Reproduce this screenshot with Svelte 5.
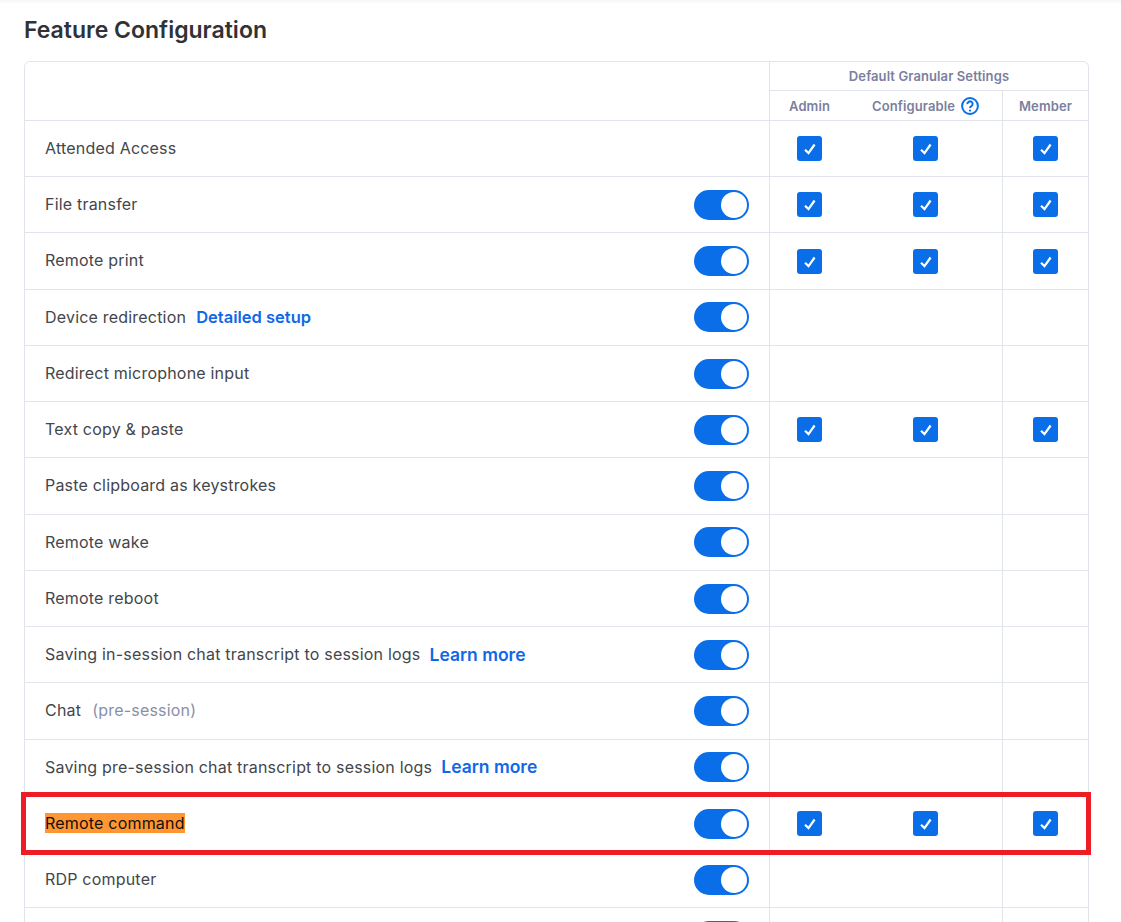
<script>
  const rows = [
    { label: 'Attended Access', toggle: false, checks: true },
    { label: 'File transfer', toggle: true, checks: true },
    { label: 'Remote print', toggle: true, checks: true },
    { label: 'Device redirection', link: 'Detailed setup', small: true, toggle: true },
    { label: 'Redirect microphone input', toggle: true },
    { label: 'Text copy & paste', toggle: true, checks: true },
    { label: 'Paste clipboard as keystrokes', toggle: true },
    { label: 'Remote wake', toggle: true },
    { label: 'Remote reboot', toggle: true },
    { label: 'Saving in-session chat transcript to session logs', link: 'Learn more', toggle: true },
    { label: 'Chat', note: '(pre-session)', toggle: true },
    { label: 'Saving pre-session chat transcript to session logs', link: 'Learn more', toggle: true },
    { label: 'Remote command', mark: true, toggle: true, checks: true },
    { label: 'RDP computer', toggle: true },
    { label: '', toggle: true }
  ];
</script>

<div class="page">
  <h2 class="title">Feature Configuration</h2>

  <div class="card">
    <div class="head">
      <div class="head__blank"></div>
      <div class="head__group">
        <div class="head__caption">Default Granular Settings</div>
        <div class="cols">
          <span>Admin</span>
          <span class="cols__mid">
            Configurable
            <svg class="help" viewBox="0 0 18 18" width="18" height="18" aria-hidden="true">
              <circle cx="9" cy="9" r="7.9" fill="none" stroke="#0a6ee8" stroke-width="2" />
              <path d="M6.4 7.1a2.6 2.6 0 1 1 4 2.1c-.9.5-1.4 1-1.4 1.9" fill="none" stroke="#0a6ee8" stroke-width="2" />
              <circle cx="9" cy="13.6" r="1.1" fill="#0a6ee8" />
            </svg>
          </span>
          <span class="cols__last">Member</span>
        </div>
      </div>
    </div>

    {#each rows as row}
      <div class="row">
        <div class="row__main">
          {#if row.label}<span class="label" class:label--mark={row.mark}>{row.label}</span>{/if}
          {#if row.note}<span class="note">{row.note}</span>{/if}
          {#if row.link}<a class="link" class:link--small={row.small} href="#top">{row.link}</a>{/if}
          {#if row.toggle}
            <span class="toggle"><i></i></span>
          {/if}
        </div>
        {#each ['admin', 'mid', 'last'] as col}
          <div class="cell cell--{col}">
            {#if row.checks}
              <span class="check">
                <svg viewBox="0 0 25 25" width="25" height="25" aria-hidden="true">
                  <path d="M8 13.8l3.5 3.3 6.1-8.6" fill="none" stroke="#fff" stroke-width="2.2" />
                </svg>
              </span>
            {/if}
          </div>
        {/each}
      </div>
    {/each}
  </div>

  <div class="callout"></div>
</div>

<style>
  :global(body) {
    margin: 0;
    background: #fff;
    font-family: Inter, "Liberation Sans", sans-serif;
  }

  .page {
    position: relative;
    box-sizing: border-box;
    height: 922px;
    padding: 0 32px 0 24px;
    overflow: hidden;
    background: linear-gradient(#f5f5f5, #fff 4px);
  }

  .title {
    margin: 0;
    padding-top: 16px;
    height: 61px;
    box-sizing: border-box;
    font-size: 23px;
    line-height: 28px;
    font-weight: 600;
    color: #2f3237;
  }

  .card {
    border: 1px solid #e1e5eb;
    border-radius: 6px;
    width: 1065px;
    box-sizing: border-box;
  }

  .head {
    display: grid;
    grid-template-columns: 744px 1fr;
    height: 57.9px;
    border-bottom: 1px solid #e1e5eb;
    box-sizing: content-box;
  }

  .head__group {
    border-left: 1px solid #e1e5eb;
    display: flex;
    flex-direction: column;
    font-size: 13px;
    font-weight: 600;
    letter-spacing: 0.1px;
    color: #7b7f9e;
  }

  .head__caption {
    height: 28px;
    line-height: 28px;
    text-align: center;
    border-bottom: 1px solid #e1e5eb;
  }

  .cols {
    flex: 1;
    display: grid;
    grid-template-columns: 79px 153px 1fr;
    text-align: center;
    line-height: 28px;
  }

  .cols span {
    padding-top: 1px;
  }

  .cols__mid {
    display: flex;
    align-items: center;
    justify-content: center;
    gap: 6px;
  }

  .cols__last {
    border-left: 1px solid #e1e5eb;
  }

  .help {
    display: block;
  }

  .row {
    display: grid;
    grid-template-columns: 744px 80px 153px 1fr;
    height: 55.25px;
    border-bottom: 1px solid #e1e5eb;
  }

  .row__main {
    display: flex;
    align-items: center;
    padding: 0 20px;
    font-size: 16px;
    letter-spacing: 0.2px;
    color: #43464b;
  }

  .label {
    line-height: 20px;
    margin-bottom: 1.5px;
  }

  .label--mark {
    background: #ff9632;
    color: #111;
  }

  .note {
    margin: 0 0 1.5px 11px;
    color: #8a8fa8;
  }

  .link {
    margin: 0 0 1.5px 9px;
    font-size: 17.5px;
    font-weight: 600;
    letter-spacing: 0;
    color: #1068e8;
    text-decoration: none;
  }

  .link--small {
    margin-left: 10px;
    font-size: 16.5px;
  }

  .toggle {
    margin-left: auto;
    box-sizing: border-box;
    width: 55px;
    height: 30px;
    padding: 2px;
    border-radius: 15px;
    background: #0a6ee8;
    display: flex;
    justify-content: flex-end;
  }

  .toggle i {
    width: 26px;
    height: 26px;
    border-radius: 50%;
    background: #fff;
  }

  .cell {
    display: flex;
    align-items: center;
    justify-content: center;
  }

  .cell--admin {
    border-left: 1px solid #e1e5eb;
  }

  .cell--last {
    border-left: 1px solid #e1e5eb;
  }

  .check {
    width: 25px;
    height: 25px;
    border-radius: 3px;
    background: #0a6ee8;
    display: block;
  }

  .check svg {
    display: block;
  }

  .callout {
    position: absolute;
    left: 21px;
    top: 792px;
    width: 1070px;
    height: 63px;
    box-sizing: border-box;
    border: 5px solid #ee1c25;
    pointer-events: none;
  }
</style>
